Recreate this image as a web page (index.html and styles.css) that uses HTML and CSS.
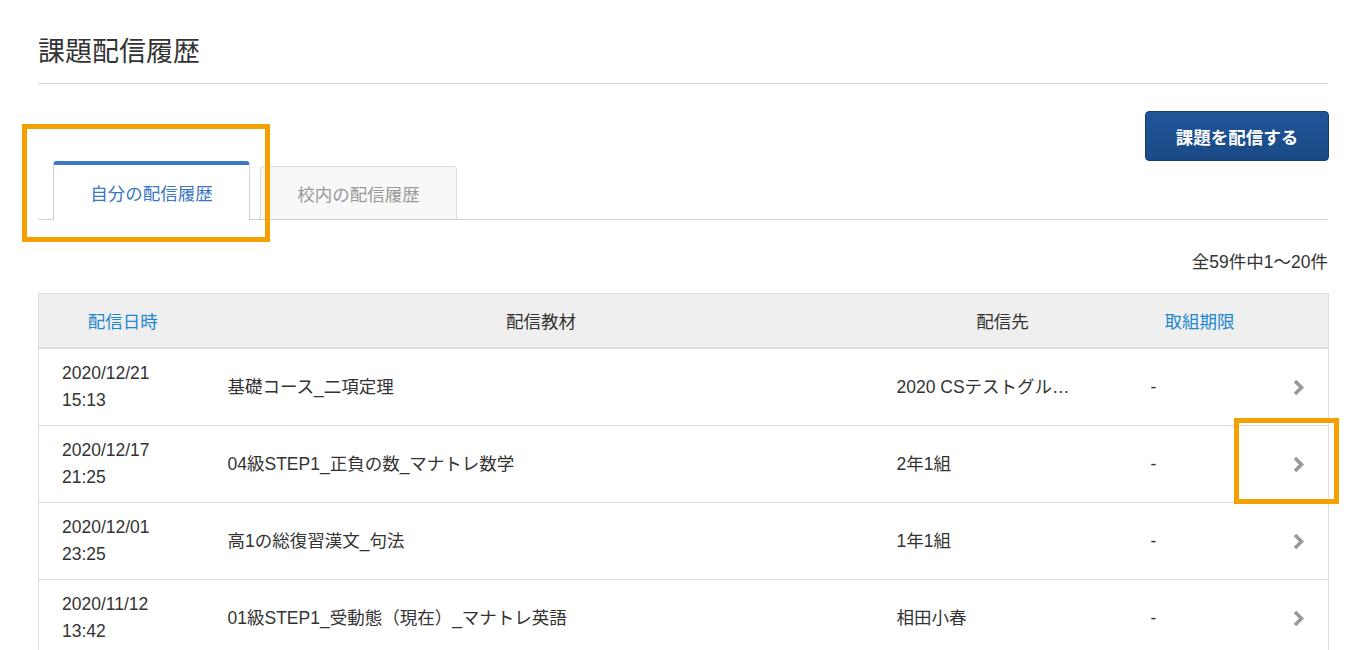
FILE: index.html
```html
<!DOCTYPE html>
<html lang="ja">

<head>
    <meta charset="UTF-8" />
    <meta name="viewport" content="width=device-width, initial-scale=1.0" />
    <title>課題配信履歴</title>
    <link rel="stylesheet" href="styles.css">
</head>

<body>
    <div class="page">
        <h1 class="page-title">課題配信履歴</h1>

        <div class="actions">
            <button class="send-btn">課題を配信する</button>
        </div>

        <div class="tabs">
            <div class="tab active">自分の配信履歴</div>
            <div class="tab">校内の配信履歴</div>
            <div class="mark mark-tab"></div>
        </div>

        <p class="count">全59件中1〜20件</p>

        <table class="history">
            <colgroup>
                <col class="c-date">
                <col class="c-material">
                <col class="c-dest">
                <col class="c-limit">
                <col class="c-arrow">
            </colgroup>
            <thead>
                <tr>
                    <th class="sortable">配信日時</th>
                    <th>配信教材</th>
                    <th>配信先</th>
                    <th class="sortable">取組期限</th>
                    <th></th>
                </tr>
            </thead>
            <tbody>
                <tr>
                    <td class="date">2020/12/21<br>15:13</td>
                    <td>基礎コース_二項定理</td>
                    <td>2020 CSテストグル…</td>
                    <td>-</td>
                    <td class="arrow">
                        <svg width="12" height="17" viewBox="0 0 12 17"><polyline points="2,2 8.5,8.5 2,15" fill="none" stroke="#999" stroke-width="3.6" /></svg>
                    </td>
                </tr>
                <tr>
                    <td class="date">2020/12/17<br>21:25</td>
                    <td>04級STEP1_正負の数_マナトレ数学</td>
                    <td>2年1組</td>
                    <td>-</td>
                    <td class="arrow">
                        <svg width="12" height="17" viewBox="0 0 12 17"><polyline points="2,2 8.5,8.5 2,15" fill="none" stroke="#999" stroke-width="3.6" /></svg>
                        <div class="mark mark-arrow"></div>
                    </td>
                </tr>
                <tr>
                    <td class="date">2020/12/01<br>23:25</td>
                    <td>高1の総復習漢文_句法</td>
                    <td>1年1組</td>
                    <td>-</td>
                    <td class="arrow">
                        <svg width="12" height="17" viewBox="0 0 12 17"><polyline points="2,2 8.5,8.5 2,15" fill="none" stroke="#999" stroke-width="3.6" /></svg>
                    </td>
                </tr>
                <tr>
                    <td class="date">2020/11/12<br>13:42</td>
                    <td>01級STEP1_受動態（現在）_マナトレ英語</td>
                    <td>相田小春</td>
                    <td>-</td>
                    <td class="arrow">
                        <svg width="12" height="17" viewBox="0 0 12 17"><polyline points="2,2 8.5,8.5 2,15" fill="none" stroke="#999" stroke-width="3.6" /></svg>
                    </td>
                </tr>
            </tbody>
        </table>
    </div>
</body>

</html>
```

FILE: styles.css
```css
body {
    margin: 0;
    font-family: "Liberation Sans", "Noto Sans CJK JP", sans-serif;
    font-size: 17.5px;
    color: #333;
    background: #fff;
}

.page {
    padding: 33px 38px 0;
}

.page-title {
    margin: 0;
    font-size: 27px;
    font-weight: normal;
    line-height: 38px;
    padding-bottom: 12px;
    border-bottom: 1px solid #cfcfcf;
    color: #333;
}

.actions {
    display: flex;
    justify-content: flex-end;
    margin-top: 27px;
}

.send-btn {
    width: 184px;
    height: 50px;
    margin-right: -1px;
    font-family: inherit;
    font-size: 17.5px;
    font-weight: bold;
    color: #fff;
    background: linear-gradient(#1f5597, #1a4a86);
    border: 1px solid #123d70;
    border-radius: 4px;
    cursor: pointer;
}

.tabs {
    position: relative;
    display: flex;
    align-items: flex-end;
    gap: 10px;
    padding-left: 15px;
    border-bottom: 1px solid #cfcfcf;
}

.tab {
    width: 197px;
    box-sizing: border-box;
    height: 53px;
    display: flex;
    align-items: center;
    justify-content: center;
    color: #999;
    background: #f8f8f8;
    border: 1px solid #ddd;
    border-bottom: none;
    border-radius: 4px 4px 0 0;
}

.tab.active {
    height: 59px;
    margin-bottom: -1px;
    color: #3a76c2;
    background: #fff;
    border-color: #cfcfcf;
    border-top: 4px solid #3a78c4;
}

.mark {
    position: absolute;
    border: 5px solid #f2a100;
    pointer-events: none;
}

.mark-tab {
    left: -16px;
    top: -37px;
    width: 238px;
    height: 108px;
}

.count {
    margin: 29px 0 18px;
    text-align: right;
    line-height: 26px;
}

.history {
    width: 100%;
    table-layout: fixed;
    border-collapse: collapse;
    border: 1px solid #ddd;
}

.c-date { width: 168px; }
.c-material { width: 669px; }
.c-dest { width: 254px; }
.c-limit { width: 140px; }
.c-arrow { width: 59px; }

.history th {
    height: 53px;
    background: #efefef;
    font-weight: normal;
    text-align: center;
    border-bottom: 2px solid #ddd;
    padding: 0;
}

.history th.sortable {
    color: #1e88cf;
}

.history td {
    height: 76px;
    padding: 0 0 0 21px;
    border-bottom: 1px solid #ddd;
    vertical-align: middle;
    white-space: nowrap;
    line-height: 27px;
}

.history td.date {
    padding-left: 23px;
}

.history td.arrow {
    position: relative;
    padding: 0;
    text-align: center;
}

.history td.arrow svg {
    display: block;
    margin: 0 auto;
}

.mark-arrow {
    left: -36px;
    top: -8px;
    width: 95px;
    height: 76px;
}
```
